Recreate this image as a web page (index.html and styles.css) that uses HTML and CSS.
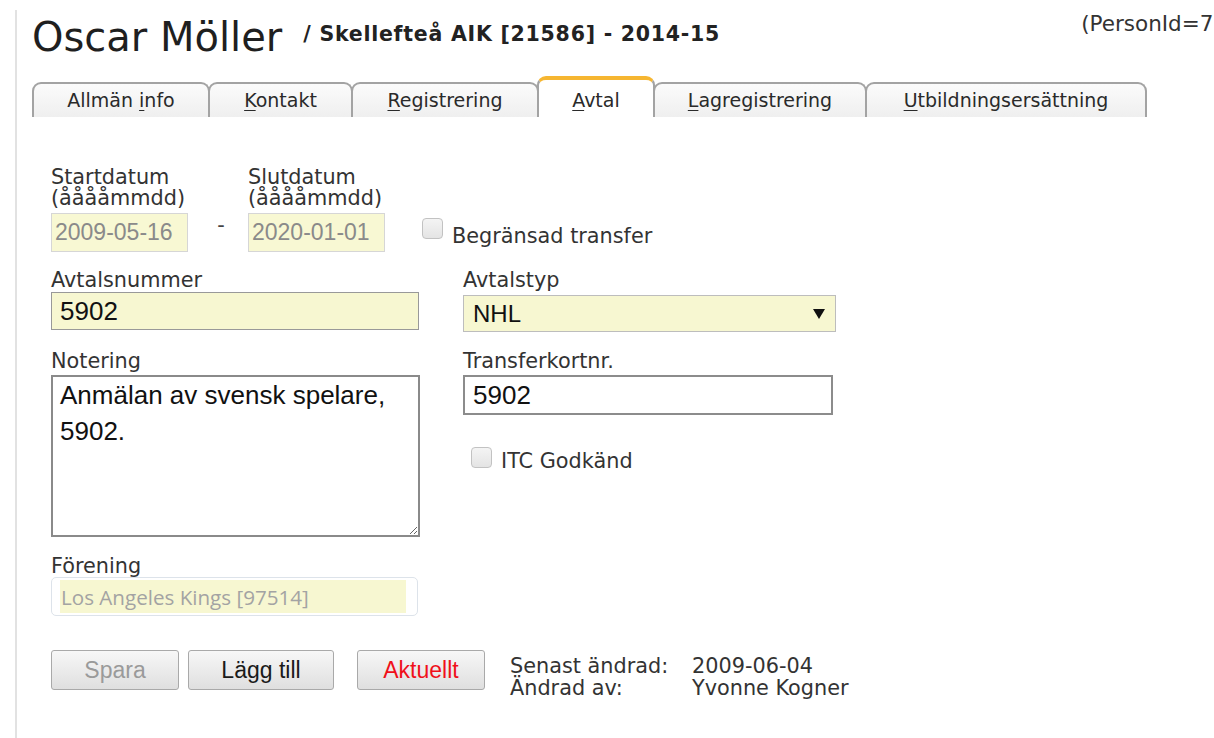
FILE: index.html
```html
<!DOCTYPE html>
<html lang="sv">
<head>
<meta charset="utf-8">
<title>Oscar Möller – Avtal</title>
<link rel="stylesheet" href="styles.css">
</head>
<body>
<div class="page">
  <header class="head">
    <h1 class="name">Oscar Möller</h1>
    <span class="team">/ Skellefteå AIK [21586] - 2014-15</span>
    <span class="pid">(PersonId=71043)</span>
  </header>

  <nav class="tabs">
    <a class="tab t-info">Allmän <u>i</u>nfo</a>
    <a class="tab t-kontakt"><u>K</u>ontakt</a>
    <a class="tab t-reg"><u>R</u>egistrering</a>
    <a class="tab t-avtal active"><u>A</u>vtal</a>
    <a class="tab t-lag"><u>L</u>agregistrering</a>
    <a class="tab t-utb"><u>U</u>tbildningsersättning</a>
  </nav>

  <form class="form">
    <div class="dates">
      <div class="field">
        <label class="lbl">Startdatum<br>(ååååmmdd)</label>
        <input class="inp date" type="text" value="2009-05-16" disabled>
      </div>
      <span class="dash">-</span>
      <div class="field">
        <label class="lbl">Slutdatum<br>(ååååmmdd)</label>
        <input class="inp date" type="text" value="2020-01-01" disabled>
      </div>
      <label class="check check-top"><input class="box" type="checkbox" disabled><span>Begränsad transfer</span></label>
    </div>

    <div class="grid">
      <div class="field">
        <label class="lbl">Avtalsnummer</label>
        <input class="inp num" type="text" value="5902">
      </div>
      <div class="field">
        <label class="lbl">Avtalstyp</label>
        <div class="select"><span>NHL</span><span class="arrow"></span></div>
      </div>

      <div class="field">
        <label class="lbl">Notering</label>
        <textarea class="note">Anmälan av svensk spelare, 5902.</textarea>
      </div>
      <div class="field">
        <label class="lbl">Transferkortnr.</label>
        <input class="inp transfer" type="text" value="5902">
        <label class="check check-itc"><input class="box" type="checkbox"><span>ITC Godkänd</span></label>
      </div>

      <div class="field club">
        <label class="lbl">Förening</label>
        <div class="club-box"><span class="club-val">Los Angeles Kings [97514]</span></div>
      </div>
    </div>

    <div class="actions">
      <button class="btn btn-save" type="button" disabled>Spara</button>
      <button class="btn btn-add" type="button">Lägg till</button>
      <button class="btn btn-red" type="button">Aktuellt</button>
      <dl class="meta">
        <dt>Senast ändrad:</dt><dd>2009-06-04</dd>
        <dt>Ändrad av:</dt><dd>Yvonne Kogner</dd>
      </dl>
    </div>
  </form>
</div>
</body>
</html>
```

FILE: styles.css
```css
html, body {
  margin: 0;
  padding: 0;
  background: #fff;
  overflow: hidden;
}

body {
  padding-top: 10px;
  font-family: "DejaVu Sans", Verdana, sans-serif;
  color: #2b2b2b;
}

.page {
  margin-left: 15px;
  border-left: 2px solid #e2e2e2;
  padding: 3px 0 0 15px;
  min-height: 740px;
}

/* header */
.head {
  display: flex;
  align-items: flex-start;
  white-space: nowrap;
  overflow: hidden;
}

.name {
  margin: 0;
  font-size: 40px;
  line-height: 48px;
  font-weight: normal;
  color: #1f1f1f;
  flex-shrink: 0;
}

.team {
  margin: 10px 0 0 21px;
  font-size: 20.5px;
  letter-spacing: 0.75px;
  line-height: 22px;
  font-weight: bold;
  color: #222;
  flex-shrink: 0;
}

.pid {
  margin: 0;
  padding-left: 361px;
  font-size: 21.5px;
  line-height: 22px;
  color: #333;
  flex-shrink: 0;
}

/* tabs */
.tabs {
  display: flex;
  align-items: flex-end;
  margin-top: 15px;
}

.tab {
  box-sizing: border-box;
  display: block;
  padding: 5px 0 6px;
  text-align: center;
  font-size: 19px;
  line-height: 22px;
  color: #2a2a2a;
  border: 2px solid #a3a3a3;
  border-bottom: 0;
  border-radius: 9px 9px 0 0;
  background: linear-gradient(#fbfbfb, #efefef);
}

.tab + .tab {
  margin-left: -2px;
}

.t-info { width: 178px; }
.t-kontakt { width: 145px; }
.t-reg { width: 188px; }
.t-avtal { width: 118px; }
.t-lag { width: 214px; }
.t-utb { width: 282px; }

.tab u {
  text-decoration-thickness: 1px;
  text-underline-offset: 3px;
}

.tab.active {
  position: relative;
  background: #fff;
  border-top: 4px solid #f6b631;
  padding-top: 9px;
}

/* form */
.form {
  padding: 50px 0 0 19px;
}

.lbl {
  display: block;
  font-size: 20.8px;
  line-height: 21px;
  color: #333;
}

.field {
  display: flex;
  flex-direction: column;
}

.inp {
  box-sizing: border-box;
  margin: 0;
  font-family: "Liberation Sans", Arial, sans-serif;
  font-size: 26px;
  color: #111;
  background: #f7f7d1;
  border: 1px solid #999;
  padding: 0 8px;
  outline: none;
}

.dates {
  display: flex;
  align-items: flex-end;
}

.date {
  margin-top: 4px;
  width: 137px;
  height: 39px;
  padding: 0 3px;
  font-size: 23px;
  color: #8a8a8a;
  border: 1px solid #d6d6d6;
  background: #f8f8d3;
}

.dash {
  width: 60px;
  padding-left: 6px;
  box-sizing: border-box;
  text-align: center;
  font-size: 20.8px;
  line-height: 20px;
  margin-bottom: 17px;
  color: #444;
}

.check {
  display: flex;
  align-items: flex-end;
  font-size: 20.8px;
  line-height: 21px;
  color: #333;
}

.box {
  appearance: none;
  -webkit-appearance: none;
  box-sizing: border-box;
  width: 21px;
  height: 21px;
  margin: 0;
  border: 1px solid #c2c2c2;
  border-radius: 4px;
  background: linear-gradient(#f4f4f4, #e4e4e4);
}

.check span {
  margin-left: 9px;
}

.check-top {
  margin: 0 0 5px 37px;
}

.check-top .box {
  margin-bottom: 8px;
}

.check-itc {
  margin: 32px 0 0 8px;
}

.check-itc .box {
  margin-bottom: 4px;
}

.grid {
  display: grid;
  grid-template-columns: 412px 373px;
  row-gap: 19px;
  margin-top: 18px;
}

.num {
  margin-top: 1px;
  width: 368px;
  height: 38px;
}

.select {
  box-sizing: border-box;
  margin-top: 4px;
  width: 373px;
  height: 37px;
  display: flex;
  align-items: center;
  justify-content: space-between;
  padding: 0 9px 0 9px;
  font-family: "Liberation Sans", Arial, sans-serif;
  font-size: 24px;
  color: #111;
  background: #f7f7d1;
  border: 1px solid #bdbdbd;
}

.arrow {
  width: 0;
  height: 0;
  margin-right: 1px;
  border-left: 6px solid transparent;
  border-right: 6px solid transparent;
  border-top: 10px solid #111;
}

.note {
  box-sizing: border-box;
  margin: 3px 0 0;
  width: 369px;
  height: 162px;
  padding: 0 7px;
  font-family: "Liberation Sans", Arial, sans-serif;
  font-size: 26px;
  line-height: 36px;
  color: #111;
  border: 2px solid #8a8a8a;
  background: #fff;
  outline: none;
  resize: both;
}

.transfer {
  margin-top: 3px;
  width: 370px;
  height: 40px;
  background: #fff;
  border: 2px solid #8c8c8c;
}

.club-box {
  box-sizing: border-box;
  width: 367px;
  height: 39px;
  padding: 2px 11px 2px 8px;
  border: 1px solid #dde3ea;
  border-radius: 5px;
  background: #fff;
  display: flex;
}

.club-val {
  flex: 1;
  display: flex;
  align-items: center;
  padding-left: 1px;
  background: #f7f7d1;
  font-family: "Open Sans", "Noto Sans", sans-serif;
  font-size: 20.6px;
  color: #a3a3a3;
}

/* buttons + meta */
.actions {
  display: flex;
  align-items: flex-start;
  margin-top: 34px;
}

.btn {
  box-sizing: border-box;
  height: 40px;
  margin: 0 9px 0 0;
  padding: 0;
  font-family: "Liberation Sans", Arial, sans-serif;
  font-size: 23px;
  color: #1a1a1a;
  border: 1px solid #a9a9a9;
  border-radius: 3px;
  background: linear-gradient(#f7f7f7, #dfdfdf);
}

.btn-save { width: 128px; color: #9a9a9a; }
.btn-add { width: 146px; margin-right: 23px; }
.btn-red { width: 128px; color: #f0101a; }

.meta {
  display: grid;
  grid-template-columns: 182px auto;
  margin: 5px 0 0 16px;
  font-size: 20.8px;
  line-height: 22px;
  color: #333;
}

.meta dt, .meta dd {
  margin: 0;
}
```
